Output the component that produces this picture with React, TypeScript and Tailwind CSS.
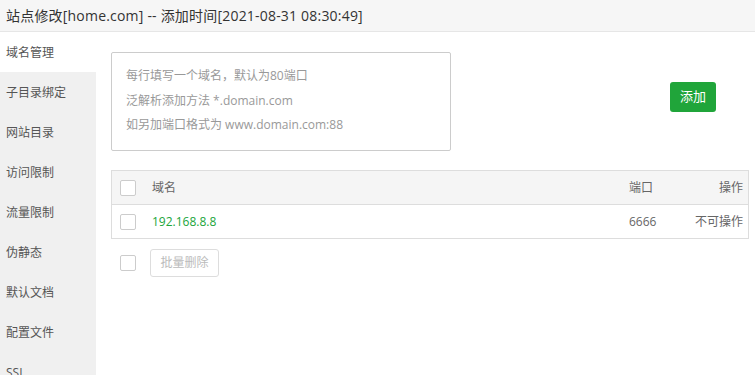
import React from 'react';

const menu = ['域名管理', '子目录绑定', '网站目录', '访问限制', '流量限制', '伪静态', '默认文档', '配置文件', 'SSL'];

const Check = () => (
  <span className="block w-4 h-4 border border-[#cccccc] rounded-[2px] bg-white shrink-0" />
);

const App = () => {
  return (
    <div
      className="w-[755px] h-[375px] overflow-hidden bg-white text-[#333]"
      style={{ fontFamily: '"Open Sans", "Noto Sans CJK SC", sans-serif' }}
    >
      {/* title bar */}
      <div className="h-8 bg-[#f6f6f6] border-b border-[#e6e6e6] flex items-center pl-[6px] pb-[1px] text-[14px] tracking-[0.2px] text-[#333]">
        站点修改[home.com] -- 添加时间[2021-08-31 08:30:49]
      </div>

      <div className="flex h-[343px]">
        <div className="w-24 bg-[#f0f0f0] shrink-0">
          {menu.map((m, i) => (
            <div
              key={m}
              className={`h-10 flex items-center pl-[6px] pt-[2px] text-[12px] text-[#555] ${i === 0 ? 'bg-white text-[#333]' : ''}`}
            >
              {m}
            </div>
          ))}
        </div>

        <div className="flex-1 pl-[15px] pr-[6px] pt-5">
          <div className="flex items-start">
            <div className="w-[340px] h-[99px] border border-[#cccccc] rounded-[2px] pl-[14px] pt-[11px] text-[12px] text-[#999] leading-[24.5px]">
              <div>每行填写一个域名，默认为80端口</div>
              <div>泛解析添加方法 *.domain.com</div>
              <div>如另加端口格式为 www.domain.com:88</div>
            </div>
            <button className="ml-[219px] mt-[30px] w-[46px] h-[30px] rounded-[3px] bg-[#20a53a] text-white text-[13px] flex items-center justify-center">
              添加
            </button>
          </div>

          <div className="mt-[19px] border border-[#dddddd] text-[12px] text-[#666]">
            <div className="h-[34px] bg-[#f5f5f5] border-b border-[#dddddd] flex items-center pl-2 pr-[5px]">
              <Check />
              <span className="ml-4 flex-1">域名</span>
              <span className="w-[60px]">端口</span>
              <span className="w-[54px] text-right">操作</span>
            </div>
            <div className="h-[33px] flex items-center pl-2 pr-[5px]">
              <Check />
              <span className="ml-4 flex-1 text-[#20a53a]">192.168.8.8</span>
              <span className="w-[60px]">6666</span>
              <span className="w-[54px] text-right">不可操作</span>
            </div>
          </div>

          <div className="flex items-center mt-[10px] pl-[9px]">
            <Check />
            <button className="ml-[14px] w-[69px] h-[28px] border border-[#dddddd] rounded-[3px] text-[12px] text-[#bbb] bg-white">
              批量删除
            </button>
          </div>
        </div>
      </div>
    </div>
  );
};

export default App;
